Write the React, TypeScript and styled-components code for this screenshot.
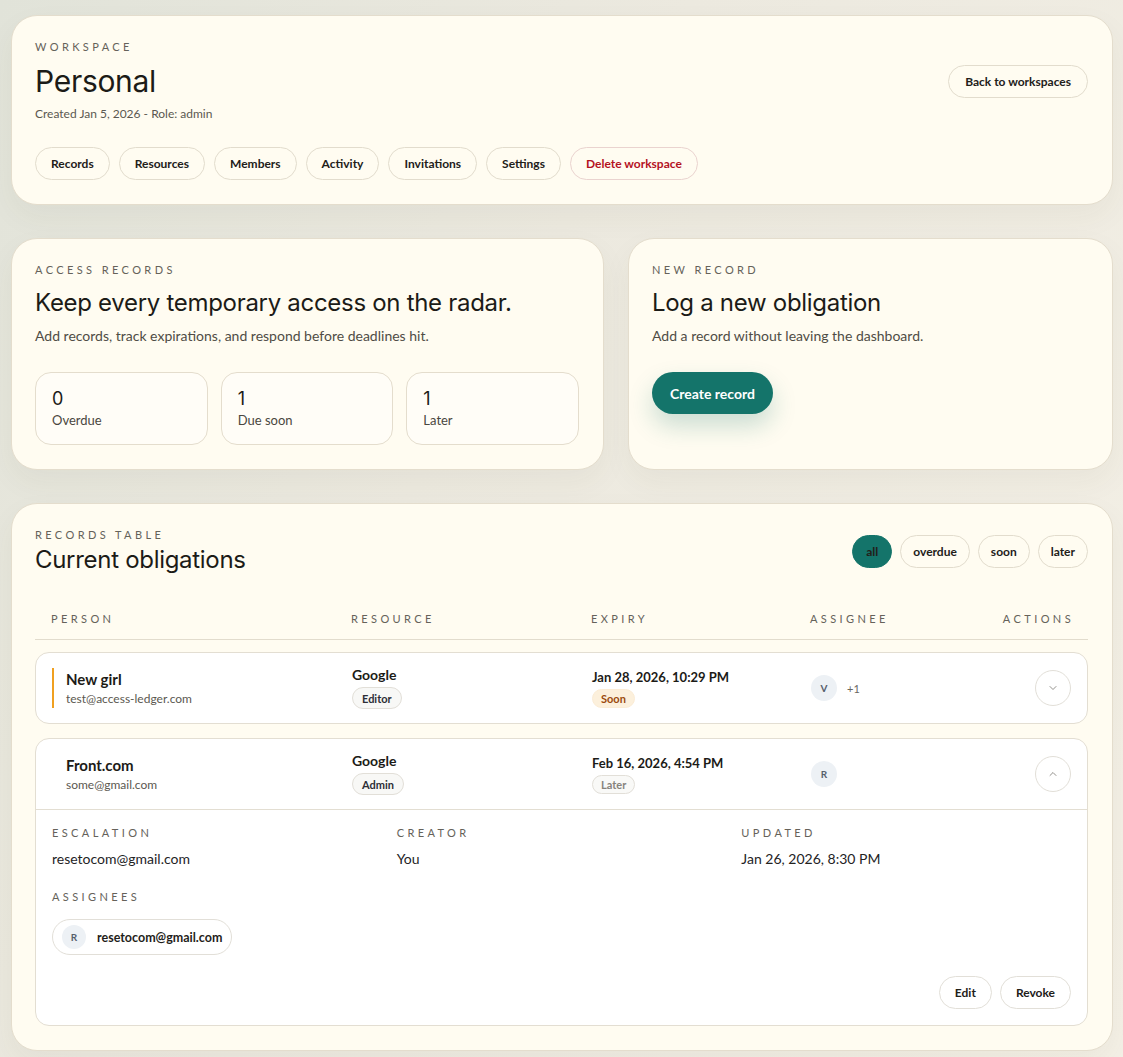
import React from "react";
import styled, { createGlobalStyle } from "styled-components";
import { ChevronDown, ChevronUp } from "lucide-react";

const Global = createGlobalStyle`
  html, body { margin: 0; padding: 0; }
  body {
    background: linear-gradient(120deg, #e1e3d9 0%, #ece9df 40%, #f4f0e6 100%);
    font-family: "Lato", "Liberation Sans", sans-serif;
    color: #1f1e1a;
    min-height: 1057px;
  }
  * { box-sizing: border-box; }
`;

const Page = styled.div`
  display: flex;
  flex-direction: column;
  gap: 33px;
  padding: 15px 10px 7px 11px;
`;

const Card = styled.section`
  background: #fffcf1;
  border: 1px solid #e4ddcd;
  border-radius: 26px;
  padding: 24px 24px 24px 23px;
  box-shadow: 0 12px 30px rgba(80, 70, 40, 0.05);
`;

const Label = styled.div`
  font-family: "Lato", "Liberation Sans", sans-serif;
  font-size: 11px;
  line-height: 14px;
  letter-spacing: 3.4px;
  text-transform: uppercase;
  color: #65625a;
`;

const HeaderRow = styled.div`
  display: flex;
  align-items: center;
  justify-content: space-between;
`;

const Title = styled.h1<{ $size: number }>`
  margin: 0;
  font-family: "Inter", "Liberation Sans", sans-serif;
  font-weight: 400;
  font-size: ${(p) => p.$size}px;
  letter-spacing: -0.3px;
  color: #1c1b17;
`;

const BigTitle = styled(Title)`
  margin-top: 9px;
  line-height: 36px;
`;

const Meta = styled.div`
  margin-top: 7px;
  font-size: 12px;
  line-height: 16px;
  color: #5b5850;
`;

const Pill = styled.button<{ $danger?: boolean; $active?: boolean; $pad?: number }>`
  height: 33px;
  padding: 0 ${(p) => p.$pad ?? 15}px;
  border-radius: 999px;
  border: 1px solid ${(p) => (p.$danger ? "#ead3cf" : p.$active ? "#14746a" : "#e2dccd")};
  background: ${(p) => (p.$active ? "#14746a" : "transparent")};
  font-family: "Lato", "Liberation Sans", sans-serif;
  font-size: 12px;
  font-weight: 700;
  color: ${(p) => (p.$danger ? "#b4121f" : "#222019")};
  display: inline-flex;
  align-items: center;
  justify-content: center;
  cursor: pointer;
`;

const NavRow = styled.div`
  margin-top: 25px;
  display: flex;
  gap: 9px;
`;

const TwoCol = styled.div`
  display: grid;
  grid-template-columns: 593px 1fr;
  gap: 24px;
`;

const Heading = styled(Title)`
  margin-top: 12px;
  line-height: 28px;
`;

const Sub = styled.p`
  margin: 9px 0 0;
  font-size: 14px;
  line-height: 20px;
  color: #4f4c45;
`;

const Stats = styled.div`
  margin-top: 26px;
  display: grid;
  grid-template-columns: repeat(3, 1fr);
  gap: 13px;
`;

const StatBox = styled.div`
  border: 1px solid #e4ddcd;
  border-radius: 16px;
  background: #fffdf7;
  padding: 14px 16px 15px;
`;

const StatNum = styled.div`
  font-family: "Inter", "Liberation Sans", sans-serif;
  font-size: 18px;
  line-height: 24px;
  color: #1c1b17;
`;

const StatLabel = styled.div`
  font-size: 13px;
  line-height: 18px;
  color: #4a4740;
`;

const PrimaryButton = styled.button`
  margin-top: 26px;
  height: 42px;
  padding: 0 18px;
  border: none;
  border-radius: 999px;
  background: #14746a;
  color: #fff;
  font-family: "Lato", "Liberation Sans", sans-serif;
  font-size: 14px;
  font-weight: 700;
  box-shadow: 0 12px 24px rgba(20, 116, 106, 0.22);
`;

const Filters = styled.div`
  display: flex;
  gap: 8px;
`;

const TableTitle = styled(Title)`
  margin-top: 3px;
  line-height: 30px;
`;

const cols = "300px 240px 219px 1fr 40px";

const TableHead = styled.div`
  margin-top: 24px;
  display: grid;
  grid-template-columns: ${cols};
  padding: 13px 16px;
  border-bottom: 1px solid #e2dccd;
`;

const HeadCell = styled(Label)<{ $right?: boolean }>`
  text-align: ${(p) => (p.$right ? "right" : "left")};
  white-space: nowrap;
  ${(p) => (p.$right ? "margin-left: -60px; margin-right: -2px;" : "")}
`;

const Rows = styled.div`
  margin-top: 12px;
  display: flex;
  flex-direction: column;
  gap: 14px;
`;

const RowCard = styled.div`
  background: #ffffff;
  border: 1px solid #e3ded2;
  border-radius: 14px;
`;

const RowMain = styled.div<{ $open?: boolean }>`
  display: grid;
  grid-template-columns: ${cols};
  align-items: center;
  padding: 14px 16px;
  border-bottom: ${(p) => (p.$open ? "1px solid #e3ded2" : "none")};
`;

const Person = styled.div<{ $accent?: string }>`
  display: flex;
  flex-direction: column;
  padding-left: 12px;
  border-left: 2px solid ${(p) => p.$accent || "transparent"};
`;

const Name = styled.div`
  font-size: 15px;
  font-weight: 700;
  line-height: 22px;
  color: #1c1b17;
`;

const Email = styled.div`
  font-size: 12px;
  line-height: 18px;
  color: #5b5850;
`;

const Stack = styled.div`
  display: flex;
  flex-direction: column;
  align-items: flex-start;
  gap: 4px;
`;

const Strong = styled.div<{ $size: number }>`
  font-size: ${(p) => p.$size}px;
  font-weight: 700;
  line-height: 16px;
  color: #1c1b17;
`;

const Badge = styled.span<{ $tone: "role" | "soon" | "later" }>`
  display: inline-flex;
  align-items: center;
  height: ${(p) => (p.$tone === "role" ? 22 : 19)}px;
  padding: 0 ${(p) => (p.$tone === "role" ? 9 : 8)}px;
  border-radius: 999px;
  font-size: 11px;
  font-weight: 700;
  border: 1px solid ${(p) => (p.$tone === "soon" ? "#fbecd5" : "#e2dfd8")};
  background: ${(p) => (p.$tone === "soon" ? "#fcf0dc" : p.$tone === "role" ? "#f8f8f6" : "#f9f9f7")};
  color: ${(p) => (p.$tone === "soon" ? "#9b4a0e" : p.$tone === "role" ? "#2d2f36" : "#86837c")};
`;

const Assignee = styled.div`
  display: flex;
  align-items: center;
  gap: 10px;
`;

const Avatar = styled.span<{ $size: number }>`
  width: ${(p) => p.$size}px;
  height: ${(p) => p.$size}px;
  border-radius: 50%;
  background: #edf1f5;
  color: #56606c;
  font-size: 10px;
  font-weight: 700;
  display: inline-flex;
  align-items: center;
  justify-content: center;
  flex-shrink: 0;
`;

const More = styled.span`
  font-size: 11px;
  color: #6a675f;
`;

const IconButton = styled.button`
  width: 36px;
  height: 36px;
  border-radius: 50%;
  border: 1px solid #e2dfd8;
  background: #fff;
  color: #77756f;
  display: inline-flex;
  align-items: center;
  justify-content: center;
  justify-self: end;
  padding: 0;
`;

const Details = styled.div`
  padding: 16px;
`;

const DetailGrid = styled.div`
  display: grid;
  grid-template-columns: repeat(3, 1fr);
  gap: 15px;
`;

const Value = styled.div`
  margin-top: 9px;
  font-size: 14px;
  line-height: 20px;
  color: #24231f;
`;

const SectionLabel = styled(Label)`
  margin-top: 21px;
`;

const Chip = styled.div`
  margin-top: 15px;
  display: inline-flex;
  align-items: center;
  gap: 11px;
  height: 36px;
  padding: 0 9px 0 9px;
  border: 1px solid #e2dfd8;
  border-radius: 999px;
  font-size: 12.5px;
  font-weight: 700;
  color: #1f1e1a;
`;

const Actions = styled.div`
  margin-top: 21px;
  display: flex;
  justify-content: flex-end;
  gap: 8px;
`;

const SmallPill = styled(Pill)`
  background: #fff;
  border-color: #e2dfd8;
`;

export default function App() {
  return (
    <>
      <Global />
      <Page>
        <Card>
          <HeaderRow>
            <div>
              <Label>Workspace</Label>
              <BigTitle $size={30}>Personal</BigTitle>
              <Meta>Created Jan 5, 2026 - Role: admin</Meta>
            </div>
            <Pill $pad={16}>Back to workspaces</Pill>
          </HeaderRow>
          <NavRow>
            <Pill>Records</Pill>
            <Pill>Resources</Pill>
            <Pill>Members</Pill>
            <Pill>Activity</Pill>
            <Pill>Invitations</Pill>
            <Pill>Settings</Pill>
            <Pill $danger>Delete workspace</Pill>
          </NavRow>
        </Card>

        <TwoCol>
          <Card>
            <Label>Access records</Label>
            <Heading $size={24}>Keep every temporary access on the radar.</Heading>
            <Sub>Add records, track expirations, and respond before deadlines hit.</Sub>
            <Stats>
              <StatBox>
                <StatNum>0</StatNum>
                <StatLabel>Overdue</StatLabel>
              </StatBox>
              <StatBox>
                <StatNum>1</StatNum>
                <StatLabel>Due soon</StatLabel>
              </StatBox>
              <StatBox>
                <StatNum>1</StatNum>
                <StatLabel>Later</StatLabel>
              </StatBox>
            </Stats>
          </Card>
          <Card>
            <Label>New record</Label>
            <Heading $size={24}>Log a new obligation</Heading>
            <Sub>Add a record without leaving the dashboard.</Sub>
            <PrimaryButton>Create record</PrimaryButton>
          </Card>
        </TwoCol>

        <Card>
          <HeaderRow>
            <div>
              <Label>Records table</Label>
              <TableTitle $size={24}>Current obligations</TableTitle>
            </div>
            <Filters>
              <Pill $active $pad={13}>all</Pill>
              <Pill $pad={12}>overdue</Pill>
              <Pill $pad={12}>soon</Pill>
              <Pill $pad={12}>later</Pill>
            </Filters>
          </HeaderRow>

          <TableHead>
            <HeadCell>Person</HeadCell>
            <HeadCell>Resource</HeadCell>
            <HeadCell>Expiry</HeadCell>
            <HeadCell>Assignee</HeadCell>
            <HeadCell $right>Actions</HeadCell>
          </TableHead>

          <Rows>
            <RowCard>
              <RowMain>
                <Person $accent="#f0a020">
                  <Name>New girl</Name>
                  <Email>test@access-ledger.com</Email>
                </Person>
                <Stack>
                  <Strong $size={14}>Google</Strong>
                  <Badge $tone="role">Editor</Badge>
                </Stack>
                <Stack>
                  <Strong $size={13}>Jan 28, 2026, 10:29 PM</Strong>
                  <Badge $tone="soon">Soon</Badge>
                </Stack>
                <Assignee>
                  <Avatar $size={26}>V</Avatar>
                  <More>+1</More>
                </Assignee>
                <IconButton aria-label="Expand">
                  <ChevronDown size={12} strokeWidth={1.6} />
                </IconButton>
              </RowMain>
            </RowCard>

            <RowCard>
              <RowMain $open>
                <Person>
                  <Name>Front.com</Name>
                  <Email>some@gmail.com</Email>
                </Person>
                <Stack>
                  <Strong $size={14}>Google</Strong>
                  <Badge $tone="role">Admin</Badge>
                </Stack>
                <Stack>
                  <Strong $size={13}>Feb 16, 2026, 4:54 PM</Strong>
                  <Badge $tone="later">Later</Badge>
                </Stack>
                <Assignee>
                  <Avatar $size={26}>R</Avatar>
                </Assignee>
                <IconButton aria-label="Collapse">
                  <ChevronUp size={12} strokeWidth={1.6} />
                </IconButton>
              </RowMain>
              <Details>
                <DetailGrid>
                  <div>
                    <Label>Escalation</Label>
                    <Value>resetocom@gmail.com</Value>
                  </div>
                  <div>
                    <Label>Creator</Label>
                    <Value>You</Value>
                  </div>
                  <div>
                    <Label>Updated</Label>
                    <Value>Jan 26, 2026, 8:30 PM</Value>
                  </div>
                </DetailGrid>
                <SectionLabel>Assignees</SectionLabel>
                <Chip>
                  <Avatar $size={24}>R</Avatar>
                  resetocom@gmail.com
                </Chip>
                <Actions>
                  <SmallPill>Edit</SmallPill>
                  <SmallPill>Revoke</SmallPill>
                </Actions>
              </Details>
            </RowCard>
          </Rows>
        </Card>
      </Page>
    </>
  );
}
